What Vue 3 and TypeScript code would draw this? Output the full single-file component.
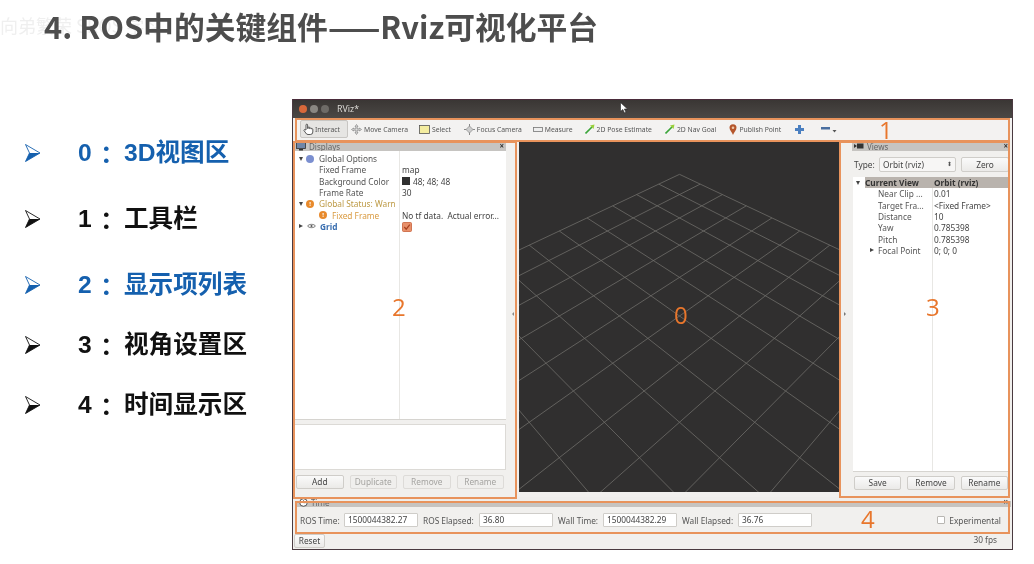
<script setup lang="ts">
import { computed } from 'vue'

interface Seg { x1: number; y1: number; x2: number; y2: number }

const W = 321
const H = 352
const F = 425

function project(x: number, y: number): [number, number] {
  const u = (x - y) / Math.SQRT2
  const v = (x + y) / Math.SQRT2
  const yy = v * Math.SQRT1_2
  const depth = 10 + v * Math.SQRT1_2
  return [W / 2 + (F * u) / depth, H / 2 - (F * yy) / depth]
}

const gridLines = computed<Seg[]>(() => {
  const out: Seg[] = []
  for (let i = -5; i <= 5; i++) {
    const [a, b] = project(i, -5)
    const [c, d] = project(i, 5)
    out.push({ x1: a, y1: b, x2: c, y2: d })
    const [e, f] = project(-5, i)
    const [g, h] = project(5, i)
    out.push({ x1: e, y1: f, x2: g, y2: h })
  }
  return out
})

const bullets = [
  { num: '0', text: '3D视图区', blue: true },
  { num: '1', text: '工具栏', blue: false },
  { num: '2', text: '显示项列表', blue: true },
  { num: '3', text: '视角设置区', blue: false },
  { num: '4', text: '时间显示区', blue: false },
]

const viewRows = [
  { k: 'Near Clip ...', v: '0.01' },
  { k: 'Target Fra...', v: '<Fixed Frame>' },
  { k: 'Distance', v: '10' },
  { k: 'Yaw', v: '0.785398' },
  { k: 'Pitch', v: '0.785398' },
]
</script>

<template>
  <div class="slide">
    <div class="watermark">向弟繁荣 SROS 学习</div>
    <h1 class="title">4. ROS中的关键组件——Rviz可视化平台</h1>
    <div class="content">
      <ul class="bullets">
        <li v-for="b in bullets" :key="b.num" class="bullet" :class="{ blue: b.blue }">
          <svg class="chev" width="17" height="20" viewBox="0 0 17 20">
            <path d="M1.500 1.500 L16 10 L1.500 18.500 L5.500 10 Z" fill="#fff" stroke="currentColor" stroke-width=".9" />
            <path d="M5.500 10 L16 10 L1.500 18.500 Z" fill="currentColor" />
          </svg>
          <span class="num">{{ b.num }}</span>
          <span class="colon">：</span>
          <span class="btext">{{ b.text }}</span>
        </li>
      </ul>

      <div class="window">
        <div class="titlebar">
          <i class="light l1"></i><i class="light l2"></i><i class="light l3"></i>
          <span class="wintitle">RViz*</span>
        </div>

        <div class="toolbar">
          <div class="tool active">
            <svg width="11" height="12" viewBox="0 0 11 12"><path d="M3 7V2a.8.8 0 0 1 1.6 0v3.5h.6V4.6a.7.7 0 0 1 1.4 0v1h.5a.7.7 0 0 1 1.4.1v.4a.7.7 0 0 1 1.3.2V9a2.5 2.5 0 0 1-2.5 2.5H5A2.5 2.5 0 0 1 2.8 10L1 7.6c-.4-.8.6-1.400 1.200-.8z" fill="#fff" stroke="#333" stroke-width=".8"/></svg>
            <span>Interact</span>
          </div>
          <div class="tool t-move">
            <svg width="11" height="11" viewBox="0 0 11 11"><path d="M5.500.5 7 2.500H6.200V4.800H8.500V4L10.500 5.500 8.500 7V6.200H6.200V8.500H7L5.500 10.500 4 8.500H4.800V6.200H2.500V7L.5 5.500 2.500 4V4.800H4.800V2.500H4z" fill="#ddd" stroke="#777" stroke-width=".6"/></svg>
            <span>Move Camera</span>
          </div>
          <div class="tool t-select">
            <svg width="11" height="9" viewBox="0 0 11 9"><rect x=".5" y=".5" width="10" height="8" fill="#f4eda0" stroke="#555" stroke-width=".8"/></svg>
            <span>Select</span>
          </div>
          <div class="tool t-focus">
            <svg width="11" height="11" viewBox="0 0 11 11"><path d="M5.500 0V11M0 5.500H11" stroke="#888" stroke-width="1"/><path d="M5.500 2 9 5.500 5.500 9 2 5.500z" fill="#ccc" stroke="#888" stroke-width=".7"/></svg>
            <span>Focus Camera</span>
          </div>
          <div class="tool t-measure">
            <svg width="10" height="5" viewBox="0 0 10 5"><rect x=".5" y=".5" width="9" height="4" fill="#eee" stroke="#777" stroke-width=".8"/></svg>
            <span>Measure</span>
          </div>
          <div class="tool t-pose">
            <svg width="10" height="10" viewBox="0 0 10 10"><path d="M.5 9.500 7 3" stroke="#3aa53a" stroke-width="1.600"/><path d="M9.500 .5 8.500 5 5 1.500z" fill="#9ad03a"/></svg>
            <span>2D Pose Estimate</span>
          </div>
          <div class="tool t-nav">
            <svg width="10" height="10" viewBox="0 0 10 10"><path d="M.5 9.500 7 3" stroke="#3aa53a" stroke-width="1.600"/><path d="M9.500 .5 8.500 5 5 1.500z" fill="#9ad03a"/></svg>
            <span>2D Nav Goal</span>
          </div>
          <div class="tool t-pin">
            <svg width="8" height="11" viewBox="0 0 8 11"><path d="M4 11C3 8 .5 6.500.5 3.800a3.500 3.500 0 0 1 7 0C7.500 6.500 5 8 4 11z" fill="#b5562c"/><circle cx="4" cy="3.800" r="1.300" fill="#f0c8a8"/></svg>
            <span>Publish Point</span>
          </div>
          <svg class="t-plus" width="9" height="9" viewBox="0 0 9 9"><path d="M3 0H6V3H9V6H6V9H3V6H0V3H3z" fill="#4a7fc0"/></svg>
          <svg class="t-minus" width="16" height="7" viewBox="0 0 16 7"><rect x="0" y="1" width="9" height="2.500" fill="#4a6fa0"/><path d="M11.500 4H15.500L13.500 6.500z" fill="#555"/></svg>
        </div>

        <div class="main">
          <section class="left">
            <div class="dockhead">
              <svg width="10" height="9" viewBox="0 0 10 9"><rect x=".5" y=".5" width="9" height="6" fill="#6f86a8" stroke="#333" stroke-width=".8"/><rect x="3" y="7" width="4" height="1.500" fill="#333"/></svg>
              <span class="dockname">Displays</span>
              <b class="x">×</b>
            </div>
            <div class="tree">
              <div class="divider d-left"></div>
              <div class="row"><i class="tri"></i><i class="dot gear"></i><span class="k">Global Options</span></div>
              <div class="row sub"><span class="k">Fixed Frame</span><span class="v">map</span></div>
              <div class="row sub"><span class="k">Background Color</span><span class="v"><i class="swatch"></i>48; 48; 48</span></div>
              <div class="row sub"><span class="k">Frame Rate</span><span class="v">30</span></div>
              <div class="row warn"><i class="tri"></i><i class="dot warnd">!</i><span class="k">Global Status: Warn</span></div>
              <div class="row warn sub2"><i class="dot warnd">!</i><span class="k">Fixed Frame</span><span class="v dark">No tf data.&nbsp; Actual error...</span></div>
              <div class="row grid-row"><i class="tri side"></i>
                <svg class="eye" width="9" height="6" viewBox="0 0 9 6"><path d="M.5 3C2 .8 7 .8 8.500 3 7 5.200 2 5.200.5 3z" fill="none" stroke="#555" stroke-width=".8"/><circle cx="4.500" cy="3" r="1.100" fill="#555"/></svg>
                <span class="k">Grid</span>
                <span class="v">
                  <svg class="check" width="10" height="10" viewBox="0 0 10 10"><rect x=".5" y=".5" width="9" height="9" rx="1" fill="#e8906a" stroke="#c8603a" stroke-width=".8"/><path d="M2.300 5 4.200 7.200 7.800 2.600" fill="none" stroke="#a8401f" stroke-width="1.200"/></svg>
                </span>
              </div>
            </div>
            <div class="desc"></div>
            <div class="btns">
              <button class="btn">Add</button>
              <button class="btn off">Duplicate</button>
              <button class="btn off">Remove</button>
              <button class="btn off">Rename</button>
            </div>
          </section>

          <div class="gutter g1"><i class="arrow-l"></i></div>

          <div class="view3d">
            <div class="render">
              <svg :width="W" :height="H" :viewBox="`0 0 ${W} ${H}`">
                <line v-for="(l, i) in gridLines" :key="i" :x1="l.x1" :y1="l.y1" :x2="l.x2" :y2="l.y2" stroke="#6f6d69" stroke-width=".8" />
              </svg>
            </div>
          </div>

          <div class="gutter g2"><i class="arrow-r"></i></div>

          <section class="right">
            <div class="dockhead">
              <svg width="10" height="6" viewBox="0 0 10 6"><rect x="3" y=".5" width="6.500" height="5" fill="#333"/><path d="M0 1 3 3 0 5z" fill="#333"/></svg>
              <span class="dockname">Views</span>
              <b class="x">×</b>
            </div>
            <div class="typerow">
              <span class="typelab">Type:</span>
              <div class="combo"><span>Orbit (rviz)</span><em>⬍</em></div>
              <button class="btn zero">Zero</button>
            </div>
            <div class="tree vtree">
              <div class="divider d-right"></div>
              <div class="row cur"><i class="tri"></i><span class="k">Current View</span><span class="v">Orbit (rviz)</span></div>
              <div v-for="r in viewRows" :key="r.k" class="row vr"><span class="k">{{ r.k }}</span><span class="v">{{ r.v }}</span></div>
              <div class="row vr fp"><i class="tri side"></i><span class="k">Focal Point</span><span class="v">0; 0; 0</span></div>
            </div>
            <div class="btns vb">
              <button class="btn">Save</button>
              <button class="btn">Remove</button>
              <button class="btn">Rename</button>
            </div>
          </section>
        </div>

        <div class="timehead">
          <svg width="9" height="9" viewBox="0 0 9 9"><circle cx="4.500" cy="4.500" r="3.800" fill="#fff" stroke="#444" stroke-width=".9"/><path d="M4.500 2.200V4.700H6.500" fill="none" stroke="#444" stroke-width=".8"/></svg>
          <span class="dockname">Time</span>
          <b class="x">×</b>
        </div>
        <div class="timerow">
          <label>ROS Time:</label><div class="inp">1500044382.27</div>
          <label>ROS Elapsed:</label><div class="inp">36.80</div>
          <label>Wall Time:</label><div class="inp">1500044382.29</div>
          <label>Wall Elapsed:</label><div class="inp">36.76</div>
          <i class="spacer"></i>
          <i class="cb"></i><label class="exp">Experimental</label>
        </div>
        <div class="status">
          <button class="btn reset">Reset</button>
          <span class="fps">30 fps</span>
        </div>

        <!-- annotations drawn over the screenshot -->
        <div class="mark m1"><span>1</span></div>
        <div class="mark m2"><span>2</span></div>
        <div class="mark m0"><span>0</span></div>
        <div class="mark m3"><span>3</span></div>
        <div class="mark m4"><span>4</span></div>
        <svg class="cursor" width="8" height="12" viewBox="0 0 8 12"><path d="M.5.5V9.500L2.800 7.500 4.500 11 6 10.300 4.400 7H7.500z" fill="#fff" stroke="#222" stroke-width=".6"/></svg>
      </div>
    </div>
  </div>
</template>

<style>
html, body { margin: 0; background: #fff; }
</style>

<style scoped>
.slide {
  position: relative;
  width: 1034px;
  height: 564px;
  overflow: hidden;
  background: #fff;
  font-family: "Noto Sans", "Noto Sans CJK SC", sans-serif;
  filter: blur(0.35px);
}
.watermark {
  position: absolute;
  left: 0;
  top: 12px;
  font: 400 18px "Noto Sans CJK SC", sans-serif;
  color: #efefef;
  white-space: nowrap;
}
.title {
  position: relative;
  margin: 0;
  padding: 6px 0 0 44px;
  height: 51px;
  box-sizing: border-box;
  font: 700 30.8px/40px "Noto Sans CJK SC", sans-serif;
  color: #4d4d4d;
  white-space: nowrap;
}
.content { display: flex; }
.bullets {
  list-style: none;
  margin: 0;
  padding: 84px 0 0 24px;
  width: 292px;
  flex: none;
  box-sizing: border-box;
  color: #111;
}
.bullet {
  display: flex;
  align-items: center;
  height: 36px;
  font: 700 24.6px/36px "Liberation Sans", "Noto Sans CJK SC", sans-serif;
}
.bullet:nth-child(2), .bullet:nth-child(3) { margin-top: 30px; }
.bullet:nth-child(4), .bullet:nth-child(5) { margin-top: 24px; }
.bullet.blue { color: #1560ae; }
.chev { margin-right: 37px; flex: none; }
.num { width: 16px; }
.colon { width: 25px; font-family: "Noto Sans CJK JP", sans-serif; }
.btext { margin-left: 5px; }

.window {
  position: relative;
  width: 721px;
  height: 451px;
  flex: none;
  margin-top: 48px;
  display: flex;
  flex-direction: column;
  background: #f1f0ee;
  border-left: 1px solid #4a3a40;
  border-right: 1px solid #4a3a40;
  border-bottom: 1px solid #4a3a40;
  box-sizing: border-box;
  font-size: 8.3px;
  line-height: 11px;
  color: #444;
}
.titlebar {
  height: 19px;
  flex: none;
  display: flex;
  align-items: center;
  padding-left: 6px;
  gap: 3px;
  background: linear-gradient(#3a3634, #4b4845);
  border-top: 1px solid #4a2b3a;
  box-sizing: border-box;
}
.light { width: 8px; height: 8px; border-radius: 50%; }
.l1 { background: #d8683a; }
.l2 { background: #8a8782; }
.l3 { background: #6e6b67; }
.wintitle { margin-left: 5px; color: #dcdad6; font-size: 8.8px; }

.toolbar {
  height: 22px;
  flex: none;
  display: flex;
  align-items: center;
  padding-left: 7px;
  background: #f3f2f1;
}
.tool { display: flex; align-items: center; gap: 2px; white-space: nowrap; color: #555; font-size: 6.8px; }
.tool.active {
  width: 48px;
  height: 18px;
  box-sizing: border-box;
  padding-left: 2px;
  gap: 1px;
  background: #e6e5e3;
  border: 1px solid #c8c6c3;
  border-radius: 2px;
}
.t-move { margin-left: 3px; }
.t-select { margin-left: 11px; }
.t-focus { margin-left: 13px; }
.t-measure { margin-left: 11px; }
.t-pose { margin-left: 12px; }
.t-nav { margin-left: 13px; }
.t-pin { margin-left: 13px; }
.t-plus { margin-left: 14px; }
.t-minus { margin-left: 17px; }

.main { height: 357px; flex: none; display: flex; }
.left {
  width: 213px;
  padding-left: 1px;
  box-sizing: border-box;
  display: flex;
  flex-direction: column;
}
.gutter { position: relative; }
.g1 { width: 13px; }
.g2 { width: 12px; }
.arrow-l, .arrow-r { position: absolute; top: 172px; width: 0; height: 0; border: 2.500px solid transparent; }
.arrow-l { left: 6px; border-right-color: #888; border-left-width: 0; }
.arrow-r { left: 4px; border-left-color: #777; border-right-width: 0; }
.view3d { width: 321px; display: flex; flex-direction: column; padding-bottom: 5px; }
.render { flex: 1; min-height: 0; background: #302f2f; overflow: hidden; }
.render svg { display: block; }
.right {
  width: 160px;
  padding-right: 2px;
  box-sizing: border-box;
  display: flex;
  flex-direction: column;
}
.dockhead {
  height: 10px;
  flex: none;
  margin-top: 1px;
  display: flex;
  align-items: center;
  gap: 3px;
  padding-left: 2px;
  background: #c6c4c1;
}
.dockname { color: #666; font-size: 8px; }
.x { margin-left: auto; margin-right: 2px; font-size: 8px; line-height: 8px; color: #333; }
.tree {
  position: relative;
  background: #fff;
  flex: none;
  height: 269px;
  border-bottom: 1px solid #d6d4d0;
  padding-top: 2px;
  box-sizing: border-box;
}
.divider { position: absolute; top: 0; bottom: 0; width: 1px; background: #e8e7e4; }
.d-left { left: 105px; }
.d-right { left: 79px; }
.row { position: relative; height: 11.300px; display: flex; align-items: center; white-space: nowrap; }
.row .v { position: absolute; left: 108px; color: #444; display: flex; align-items: center; }
.row .k { color: #555; }
.tri {
  width: 0; height: 0;
  margin: 0 3px 0 5px;
  border-left: 2.500px solid transparent;
  border-right: 2.500px solid transparent;
  border-top: 4px solid #444;
}
.tri.side { border: 2.500px solid transparent; border-left: 4px solid #444; border-right-width: 0; margin-right: 4px; }
.dot {
  width: 8px; height: 8px; border-radius: 50%;
  margin-right: 5px;
  flex: none;
}
.gear { background: #7b8fd0; }
.warnd { background: #e88a2c; color: #fff; font: 700 6px/8px "Noto Sans", sans-serif; text-align: center; }
.sub { padding-left: 25px; }
.warn .k { color: #bd9a45; }
.sub2 { padding-left: 25px; }
.sub2 .k { color: #d99a40; }
.v.dark { color: #444; }
.swatch { width: 8px; height: 8px; background: #303030; margin-right: 3px; }
.eye { margin-right: 4px; }
.grid-row .k { color: #3a6fb0; font-weight: 700; }
.check { margin-top: 1px; }
.desc {
  height: 46px;
  margin-top: 4px;
  flex: none;
  background: #fff;
  border: 1px solid #dcdad6;
  box-sizing: border-box;
}
.btns { display: flex; gap: 6px; margin-top: 5px; padding: 0 2px; }
.btn {
  flex: 1;
  height: 14px;
  padding: 0;
  font: inherit;
  font-size: 8.3px;
  line-height: 12px;
  color: #444;
  background: linear-gradient(#fafafa, #ebeae8);
  border: 1px solid #cfcdc9;
  border-radius: 2px;
}
.btn.off { color: #a4a3a0; background: #f0efed; border-color: #dddbd8; }
.typerow { display: flex; align-items: center; height: 15px; margin-top: 6px; padding-left: 2px; }
.typelab { width: 25px; flex: none; }
.combo {
  width: 77px; height: 15px; flex: none;
  box-sizing: border-box;
  padding: 0 3px;
  display: flex; align-items: center; justify-content: space-between;
  background: #f7f6f5; border: 1px solid #cfcdc9; border-radius: 2px;
}
.combo em { font-style: normal; font-size: 6px; color: #555; }
.btn.zero { flex: none; width: 48px; height: 15px; margin-left: 5px; }
.vtree { margin: 5px 0 0 1px; height: 295px; padding-top: 0; }
.cur { background: linear-gradient(90deg, #fff 12px, #b9b3ad 12px); margin-top: 0; padding-left: 0; }
.cur .tri { margin-left: 3px; margin-right: 5px; }
.cur .k, .cur .v { color: #333; font-weight: 700; }
.vtree .row .v { left: 81px; }
.vr { padding-left: 25px; }
.fp { padding-left: 15px; }
.fp .tri { margin-left: 2px; margin-right: 4px; }
.vb { margin-top: 4px; }
.timehead {
  height: 10px;
  flex: none;
  display: flex;
  align-items: center;
  gap: 3px;
  padding-left: 4px;
  background: linear-gradient(#efeeec 40%, #c6c4c1 40%);
  margin-left: 2px;
  width: 716px;
  box-sizing: border-box;
}
.timehead .x { margin-right: 3px; }
.timerow {
  height: 26px;
  flex: none;
  display: flex;
  align-items: center;
  padding-left: 7px;
}
.timerow label { white-space: nowrap; color: #555; width: 44px; }
.timerow label:nth-of-type(2), .timerow label:nth-of-type(4) { width: 56px; margin-left: 5px; }
.timerow label:nth-of-type(3) { width: 45px; margin-left: 5px; }
.inp {
  width: 74px; height: 14px;
  flex: none;
  box-sizing: border-box;
  padding-left: 3px;
  line-height: 12px;
  background: #fff;
  border: 1px solid #cfcdc9;
  border-radius: 1px;
}
.spacer { flex: 1; }
.cb { width: 8px; height: 8px; background: #fff; border: 1px solid #b8b6b2; box-sizing: border-box; margin-right: 4px; border-radius: 1px; }
.timerow label.exp { width: auto; margin: 0 11px 0 0; }
.status { flex: none; height: 16px; display: flex; align-items: center; padding-left: 1px; }
.btn.reset { flex: none; width: 31px; height: 14px; }
.fps { margin-left: auto; margin-right: 15px; margin-top: -3px; color: #555; }

.mark {
  position: absolute;
  border: 2px solid #e8935c;
  box-sizing: border-box;
  font: 400 24px/24px "Open Sans", sans-serif;
  color: #e8762c;
  pointer-events: none;
}
.mark span { position: absolute; }
.m1 { left: 2px; top: 19px; width: 715px; height: 24px; }
.m1 span { left: 582px; top: -2px; }
.m2 { left: 0; top: 42px; width: 224px; height: 358px; }
.m2 span { left: 97px; top: 152px; }
.m0 { left: 224px; top: 41px; width: 323px; height: 2px; border-width: 1px 0 0; }
.m0 span { left: 157px; top: 162px; }
.m3 { left: 546px; top: 42px; width: 171px; height: 357px; }
.m3 span { left: 85px; top: 152px; }
.m4 { left: 2px; top: 402px; width: 715px; height: 33px; }
.m4 span { left: 564px; top: 4px; }
.cursor { position: absolute; left: 327px; top: 3px; }
</style>
